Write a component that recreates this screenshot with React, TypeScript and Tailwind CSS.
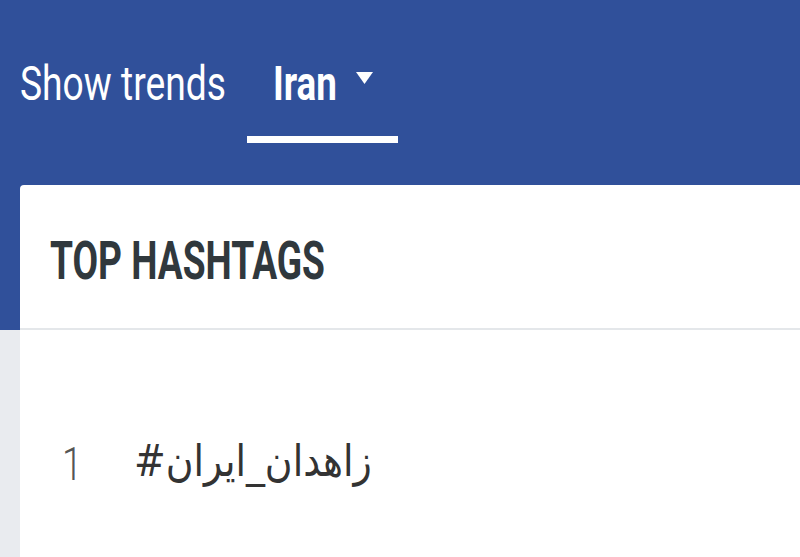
import { ReactNode } from "react";

function Squeeze({ w, s, children }: { w: string; s: string; children: ReactNode }) {
  // text in the shot is narrow, so squash it and reserve the real width
  return (
    <div className={`${w} whitespace-nowrap`}>
      <span className={`inline-block origin-left ${s}`}>{children}</span>
    </div>
  );
}

function App() {
  return (
    <div className="w-[800px] h-[557px] overflow-hidden bg-[#e9ebef] font-['Roboto',sans-serif]">
      <div className="h-[330px] bg-[#30509a]">
        <div className="flex items-start pl-[20px] pt-[59px]">
          <Squeeze w="w-[227px]" s="scale-x-[0.76] text-[49px] leading-none text-white">
            Show trends
          </Squeeze>
          <div className="flex w-[151px] flex-col">
            <div className="flex h-[49px] items-start pl-[26px]">
              <Squeeze w="w-[83px]" s="scale-x-[0.75] text-[49px] font-bold leading-none text-white">
                Iran
              </Squeeze>
              <svg width="17" height="12" viewBox="0 0 17 12" className="mt-[13px]">
                <path d="M0 0h17L8.5 12z" fill="#fff" />
              </svg>
            </div>
            <div className="mt-[28px] h-[7px] bg-white" />
          </div>
        </div>
      </div>

      <div className="-mt-[145px] ml-[20px] rounded-tl-[4px] bg-white">
        <div className="flex h-[145px] items-start border-b-2 border-[#e4e7ea] pl-[30px] pt-[50px]">
          <Squeeze w="w-[280px]" s="scale-x-[0.7] text-[53px] font-bold leading-none text-[#30383d]">
            TOP HASHTAGS
          </Squeeze>
        </div>
        <div className="flex h-[300px] items-start pl-[42px] pt-[106px]">
          <div className="w-[72px] pt-[5px] whitespace-nowrap">
            <span className="inline-block origin-left scale-x-[0.8] text-[46px] font-light leading-none text-[#555]">
              1
            </span>
          </div>
          <div className="pt-[3px]">
            <Squeeze w="w-[260px]" s="scale-x-[0.86] text-[44px] leading-none text-[#333] font-['DejaVu_Sans',sans-serif]">
              #زاهدان_ایران
            </Squeeze>
          </div>
        </div>
      </div>
    </div>
  );
}

export default App;
